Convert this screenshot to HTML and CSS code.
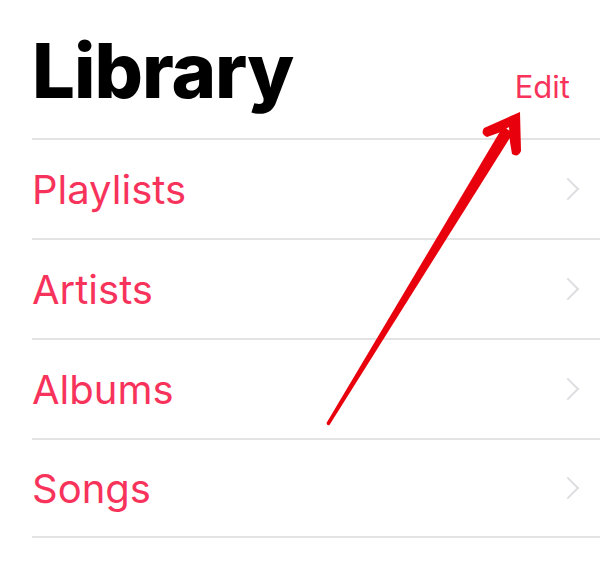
FILE: index.html
```html
<!DOCTYPE html>
<html lang="en">
<head>
    <meta charset="UTF-8">
    <meta name="viewport" content="width=device-width, initial-scale=1.0">
    <title>Library</title>
    <link rel="stylesheet" href="styles.css">
</head>
<body>
    <div class="screen">
        <div class="header">
            <h1>Library</h1>
            <a href="#" class="edit-link">Edit</a>
        </div>

        <ul class="menu">
            <li class="menu-row"><span>Playlists</span><span class="chevron"></span></li>
            <li class="menu-row"><span>Artists</span><span class="chevron"></span></li>
            <li class="menu-row"><span>Albums</span><span class="chevron"></span></li>
            <li class="menu-row"><span>Songs</span><span class="chevron"></span></li>
        </ul>

        <!-- strzałka nałożona na zrzut -->
        <svg class="pointer-arrow" width="600" height="562" viewBox="0 0 600 562">
            <path d="M326.5 423 Q327 426 329.5 425 L513 133 L503 126.5 Z" fill="#e8000c"/>
            <path d="M520 112 L484 128 Q480 134 487 137 L501 132 L509 127 L510 142 L512 154 Q518 158 521 151 Z" fill="#e8000c"/>
        </svg>
    </div>
</body>
</html>
```
FILE: styles.css
```css
body {
    margin: 0;
    padding: 0;
    background-color: #fff;
    font-family: Inter, "Liberation Sans", sans-serif;
}

.screen {
    position: relative;
    width: 600px;
    height: 562px;
    overflow: hidden;
    padding-left: 32px;
    box-sizing: border-box;
}

.header {
    display: flex;
    justify-content: space-between;
    align-items: baseline;
    height: 138px;
    padding-right: 30px;
    box-sizing: border-box;
}

h1 {
    margin: 0;
    padding-top: 32px;
    font-size: 76px;
    font-weight: 800;
    line-height: 1;
    letter-spacing: -1px;
    color: #000;
}

.edit-link {
    font-size: 31px;
    color: #f7335b;
    text-decoration: none;
}

.menu {
    list-style: none;
    margin: 0;
    padding: 0;
}

.menu-row {
    display: flex;
    justify-content: space-between;
    align-items: center;
    height: 100px;
    padding-right: 24px;
    border-top: 2px solid #e3e3e3;
    box-sizing: border-box;
    font-size: 40px;
    color: #f7335b;
}

.menu-row:last-child {
    border-bottom: 2px solid #e3e3e3;
}

.chevron {
    width: 14px;
    height: 14px;
    border-top: 2px solid #dedee2;
    border-right: 2px solid #dedee2;
    transform: rotate(45deg);
}

.pointer-arrow {
    position: absolute;
    top: 0;
    left: 0;
}
```
